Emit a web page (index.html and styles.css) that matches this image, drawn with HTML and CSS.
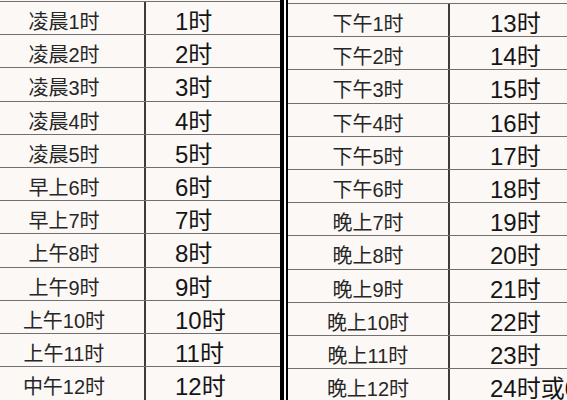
FILE: index.html
```html
<!DOCTYPE html>
<html lang="zh-CN">
<head>
<meta charset="utf-8">
<title>时间对照表</title>
<link rel="stylesheet" href="styles.css">
</head>
<body>
<div class="page">
  <div class="half half-left">
    <div class="row"><div class="c1">凌晨1时</div><div class="c2">1时</div></div>
    <div class="row"><div class="c1">凌晨2时</div><div class="c2">2时</div></div>
    <div class="row"><div class="c1">凌晨3时</div><div class="c2">3时</div></div>
    <div class="row"><div class="c1">凌晨4时</div><div class="c2">4时</div></div>
    <div class="row"><div class="c1">凌晨5时</div><div class="c2">5时</div></div>
    <div class="row"><div class="c1">早上6时</div><div class="c2">6时</div></div>
    <div class="row"><div class="c1">早上7时</div><div class="c2">7时</div></div>
    <div class="row"><div class="c1">上午8时</div><div class="c2">8时</div></div>
    <div class="row"><div class="c1">上午9时</div><div class="c2">9时</div></div>
    <div class="row"><div class="c1">上午10时</div><div class="c2">10时</div></div>
    <div class="row"><div class="c1">上午11时</div><div class="c2">11时</div></div>
    <div class="row"><div class="c1">中午12时</div><div class="c2">12时</div></div>
  </div>
  <div class="sep"></div>
  <div class="half half-right">
    <div class="row"><div class="c1">下午1时</div><div class="c2">13时</div></div>
    <div class="row"><div class="c1">下午2时</div><div class="c2">14时</div></div>
    <div class="row"><div class="c1">下午3时</div><div class="c2">15时</div></div>
    <div class="row"><div class="c1">下午4时</div><div class="c2">16时</div></div>
    <div class="row"><div class="c1">下午5时</div><div class="c2">17时</div></div>
    <div class="row"><div class="c1">下午6时</div><div class="c2">18时</div></div>
    <div class="row"><div class="c1">晚上7时</div><div class="c2">19时</div></div>
    <div class="row"><div class="c1">晚上8时</div><div class="c2">20时</div></div>
    <div class="row"><div class="c1">晚上9时</div><div class="c2">21时</div></div>
    <div class="row"><div class="c1">晚上10时</div><div class="c2">22时</div></div>
    <div class="row"><div class="c1">晚上11时</div><div class="c2">23时</div></div>
    <div class="row"><div class="c1">晚上12时</div><div class="c2">24时或0时</div></div>
  </div>
</div>
</body>
</html>
```
FILE: styles.css
```css
html, body {
  margin: 0;
  padding: 0;
  background: #fbf8f6;
}
.page {
  display: flex;
  width: 567px;
  height: 400px;
  overflow: hidden;
  background: #fbf8f6;
  font-family: "Liberation Sans", "Noto Sans CJK SC", sans-serif;
  color: #151515;
}
.half {
  display: flex;
  flex-direction: column;
}
.half-left {
  width: 296px;
  margin-left: -16px;
  flex: none;
  padding-top: 1px;
}
.half-right {
  flex: 1;
  padding-top: 3px;
  min-width: 0;
}
.sep {
  flex: none;
  width: 2px;
  border-left: 4px solid #000;
  border-right: 2px solid #000;
}
.row {
  flex: none;
  display: grid;
  height: 33.2px;
  box-sizing: border-box;
  border-top: 1px solid #707070;
}
.half-left .row {
  grid-template-columns: 162px 1fr;
}
.half-right .row {
  grid-template-columns: 162px 1fr;
}
.c1 {
  display: flex;
  align-items: center;
  justify-content: center;
  border-right: 2px solid #3c3c3c;
  padding-bottom: 2px;
  font-size: 20px;
  color: #262626;
  white-space: nowrap;
}
.c2 {
  display: flex;
  align-items: center;
  padding-bottom: 4px;
  font-size: 24px;
  white-space: nowrap;
}
.half-left .c2 {
  padding-left: 29px;
}
.half-right .c2 {
  padding-left: 40px;
}
```
